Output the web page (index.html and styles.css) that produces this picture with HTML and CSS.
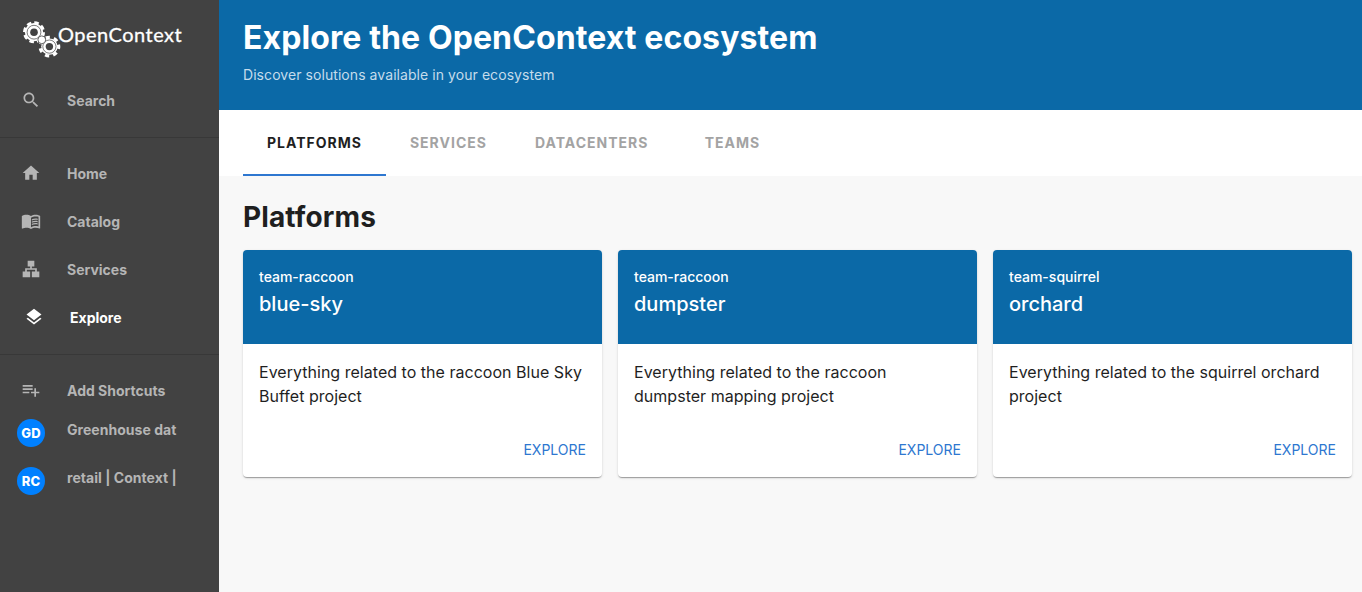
FILE: index.html
```html
<!DOCTYPE html>
<html lang="en">
<head>
<meta charset="utf-8">
<title>OpenContext</title>
<link rel="stylesheet" href="styles.css">
</head>
<body>
<div class="app">
  <aside class="sidebar">
    <div class="logo">
      <svg class="gears" viewBox="0 0 39 39">
        <circle cx="12" cy="12.2" r="9.1" fill="#fff"/>
        <circle cx="12" cy="12.2" r="9.6" fill="none" stroke="#fff" stroke-width="2.8" stroke-dasharray="4.5 3.04"/>
        <circle cx="12" cy="12.2" r="6.9" fill="none" stroke="#424242" stroke-width=".7"/>
        <circle cx="12" cy="12.2" r="3.8" fill="#424242"/>
        <circle cx="27.4" cy="26.6" r="8.2" fill="#fff"/>
        <circle cx="27.4" cy="26.6" r="9.3" fill="none" stroke="#fff" stroke-width="3.2" stroke-dasharray="4.2 4.147" transform="rotate(-12 27.4 26.6)"/>
        <circle cx="27.4" cy="26.6" r="6.6" fill="none" stroke="#424242" stroke-width=".7"/>
        <circle cx="27.4" cy="26.6" r="3.7" fill="#424242"/>
        <circle cx="19.8" cy="19.8" r="3.9" fill="#fff" stroke="#424242" stroke-width=".8"/>
      </svg>
      <span class="wordmark">OpenContext</span>
    </div>
    <nav class="nav">
      <a class="item"><svg class="icon" viewBox="0 0 24 24"><path d="M15.5 14h-.79l-.28-.27C15.41 12.59 16 11.11 16 9.5 16 5.91 13.09 3 9.5 3S3 5.91 3 9.5 5.91 16 9.5 16c1.61 0 3.09-.59 4.23-1.57l.27.28v.79l5 4.99L20.49 19l-4.99-5zm-6 0C7.01 14 5 11.99 5 9.5S7.01 5 9.5 5 14 7.01 14 9.5 11.99 14 9.5 14z"/></svg><span>Search</span></a>
    </nav>
    <nav class="nav ruled">
      <a class="item"><svg class="icon" viewBox="0 0 24 24"><path d="M10 20v-6h4v6h5v-8h3L12 3 2 12h3v8z"/></svg><span>Home</span></a>
      <a class="item"><svg class="icon" viewBox="0 0 24 24"><path d="M21 5c-1.11-.35-2.33-.5-3.5-.5-1.95 0-4.05.4-5.5 1.5-1.45-1.1-3.55-1.5-5.5-1.5S2.45 4.9 1 6v14.65c0 .25.25.5.5.5.1 0 .15-.05.25-.05C3.1 20.45 5.05 20 6.5 20c1.95 0 4.05.4 5.5 1.5 1.35-.85 3.8-1.5 5.5-1.5 1.65 0 3.35.3 4.75 1.05.1.05.15.05.25.05.25 0 .5-.25.5-.5V6c-.6-.45-1.25-.75-2-1zm0 13.5c-1.1-.35-2.3-.5-3.5-.5-1.7 0-4.15.65-5.5 1.5V8c1.35-.85 3.8-1.5 5.5-1.5 1.2 0 2.4.15 3.5.5v11.5z"/><path d="M17.5 10.5c.88 0 1.73.09 2.5.26V9.24c-.79-.15-1.64-.24-2.5-.24-1.7 0-3.24.29-4.5.83v1.66c1.13-.64 2.7-.99 4.5-.99zM13 12.49v1.66c1.13-.64 2.7-.99 4.5-.99.88 0 1.73.09 2.5.26V11.9c-.79-.15-1.64-.24-2.5-.24-1.7 0-3.24.3-4.5.83zm4.5 1.84c-1.7 0-3.24.29-4.5.83v1.66c1.13-.64 2.7-.99 4.5-.99.88 0 1.73.09 2.5.26v-1.52c-.79-.16-1.64-.24-2.5-.24z"/></svg><span>Catalog</span></a>
      <a class="item"><svg class="icon" viewBox="0 0 24 24"><path d="M13 22h9v-7h-3v-4h-6V9h3V2H8v7h3v2H5v4H2v7h9v-7H7v-2h10v2h-4z"/></svg><span>Services</span></a>
      <a class="item active"><svg class="icon" viewBox="0 0 24 24"><path d="m11.99 18.54-7.37-5.73L3 14.07l9 7 9-7-1.63-1.27-7.38 5.74zM12 16l7.36-5.73L21 9l-9-7-9 7 1.63 1.27L12 16z"/></svg><span>Explore</span></a>
    </nav>
    <nav class="nav ruled">
      <a class="item"><svg class="icon" viewBox="0 0 24 24"><path d="M14 10H2v2h12v-2zm0-4H2v2h12V6zm4 8v-4h-2v4h-4v2h4v4h2v-4h4v-2h-4zM2 16h8v-2H2v2z"/></svg><span>Add Shortcuts</span></a>
      <div class="shortcut"><span class="avatar">GD</span><span>Greenhouse dat</span></div>
      <div class="shortcut"><span class="avatar">RC</span><span>retail | Context |</span></div>
    </nav>
  </aside>
  <main class="main">
    <header class="header">
      <h1>Explore the OpenContext ecosystem</h1>
      <p>Discover solutions available in your ecosystem</p>
    </header>
    <div class="tabs">
      <div class="tab selected">Platforms</div>
      <div class="tab">Services</div>
      <div class="tab wide">Datacenters</div>
      <div class="tab">Teams</div>
    </div>
    <section class="content">
      <h2>Platforms</h2>
      <div class="cards">
        <article class="card">
          <div class="card-head"><div class="team">team-raccoon</div><h3>blue-sky</h3></div>
          <p>Everything related to the raccoon Blue Sky Buffet project</p>
          <a class="action">Explore</a>
        </article>
        <article class="card">
          <div class="card-head"><div class="team">team-raccoon</div><h3>dumpster</h3></div>
          <p>Everything related to the raccoon dumpster mapping project</p>
          <a class="action">Explore</a>
        </article>
        <article class="card">
          <div class="card-head"><div class="team">team-squirrel</div><h3>orchard</h3></div>
          <p>Everything related to the squirrel orchard project</p>
          <a class="action">Explore</a>
        </article>
      </div>
    </section>
  </main>
</div>
</body>
</html>
```
FILE: styles.css
```css
* { box-sizing: border-box; }
body { margin: 0; font-family: Inter, "Liberation Sans", sans-serif; color: #1f1f1f; overflow: hidden; }
h1, h2, h3, p { margin: 0; }
.app { display: flex; height: 592px; }

.sidebar { width: 219px; flex: none; background: #424242; color: #b5b5b5; }
.logo { height: 76px; display: flex; align-items: flex-start; padding: 20px 0 0 22px; }
.gears { width: 39px; height: 39px; flex: none; }
.wordmark { font: 400 20px/28px Lato, sans-serif; letter-spacing: .5px; color: #fff; -webkit-text-stroke: .3px #fff; margin-left: -3px; }
.nav { padding-bottom: 13px; }
.ruled { border-top: 1px solid #383838; padding: 11px 0 13px; }
.item { height: 48px; display: flex; align-items: center; font-size: 14px; font-weight: 700; padding-left: 21px; }
.icon { width: 20px; height: 20px; fill: currentColor; margin-right: 26px; flex: none; }
.active { color: #fff; padding-left: 24px; }
.shortcut { height: 48px; display: flex; font-size: 14px; font-weight: 700; line-height: 17px; letter-spacing: .04px; padding: 7px 0 0 17px; }
.avatar { width: 28px; height: 28px; margin: -2px 22px 0 0; border-radius: 50%; background: #0080ff; color: #fff; font-size: 13px; font-weight: 800; line-height: 28px; text-align: center; }

.main { flex: 1; background: #f8f8f8; }
.header { height: 110px; background: #0b69a7; color: #fff; padding: 18px 24px; }
.header h1 { font-size: 32px; line-height: 39px; font-weight: 700; letter-spacing: .1px; }
.header p { font-size: 14px; line-height: 20px; letter-spacing: .065px; margin-top: 8px; color: #c5dceb; }
.tabs { height: 66px; background: #fff; display: flex; padding-left: 24px; }
.tab { height: 66px; min-width: 120px; padding: 0 24px; text-align: center; font-size: 14px; font-weight: 700; line-height: 66px; letter-spacing: 1px; text-transform: uppercase; color: #a3a3a3; }
.selected { color: #1f1f1f; border-bottom: 2px solid #2e77d0; }
.content { padding: 22px 10px 0 24px; }
.content h2 { font-size: 28px; line-height: 38px; font-weight: 700; letter-spacing: .12px; margin-bottom: 14px; }
.cards { display: grid; grid-template-columns: repeat(3, 359px); gap: 16px; }
.card { height: 227px; background: #fff; border-radius: 4px; overflow: hidden; display: flex; flex-direction: column; box-shadow: 0 2px 1px -1px rgba(0,0,0,.2), 0 1px 1px rgba(0,0,0,.14), 0 1px 3px rgba(0,0,0,.12); }
.card-head { height: 94px; background: #0b69a7; color: #fff; padding: 16px; }
.team { font-size: 14px; line-height: 22px; font-weight: 500; }
.card h3 { font-size: 20px; line-height: 32px; font-weight: 500; }
.card p { font-size: 16px; line-height: 24px; letter-spacing: .025px; padding: 16px; }
.action { font-size: 14px; line-height: 24px; color: #2e77d0; text-transform: uppercase; text-align: right; padding-right: 16px; margin: auto 0 15px; }
```
